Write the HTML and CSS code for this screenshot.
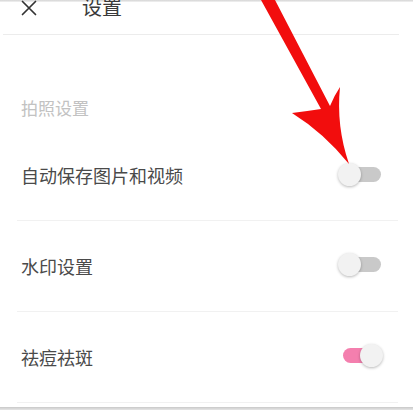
FILE: index.html
```html
<!DOCTYPE html>
<html lang="zh-CN">
<head>
<meta charset="utf-8">
<title>设置</title>
<link rel="stylesheet" href="styles.css">
</head>
<body>
<div class="page">
  <div class="top-edge"></div>
  <header class="header">
    <div class="header-row">
      <svg class="close-icon" viewBox="0 0 16 16" width="16" height="16" aria-hidden="true">
        <path d="M1.5 1.5 L14.5 14.5 M14.5 1.5 L1.5 14.5" stroke="#333" stroke-width="1.7" fill="none" stroke-linecap="round"/>
      </svg>
      <span class="title">设置</span>
    </div>
  </header>
  <main class="content">
    <div class="section-title">拍照设置</div>
    <div class="row">
      <span class="label">自动保存图片和视频</span>
      <span class="toggle"><span class="track"></span><span class="knob"></span></span>
    </div>
    <div class="row">
      <span class="label">水印设置</span>
      <span class="toggle"><span class="track"></span><span class="knob"></span></span>
    </div>
    <div class="row">
      <span class="label">祛痘祛斑</span>
      <span class="toggle on"><span class="track"></span><span class="knob"></span></span>
    </div>
  </main>
  <div class="bottom-edge"></div>
  <svg class="arrow" viewBox="0 0 413 410" width="413" height="410" aria-hidden="true">
    <path d="M261 0 L275 0 L330 106 Q334 96 340 87 Q336 126 349 164 Q324 133 292 113 Q308 111 321 109 Z" fill="#f20d0d"/>
  </svg>
</div>
</body>
</html>
```

FILE: styles.css
```css
html, body {
  margin: 0;
  padding: 0;
  background: #ffffff;
}

body {
  font-family: "Noto Sans CJK SC", "Noto Sans", sans-serif;
  width: 413px;
  height: 410px;
  overflow: hidden;
}

.page {
  position: relative;
  width: 413px;
  height: 410px;
  display: flex;
  flex-direction: column;
  overflow: hidden;
}

.top-edge {
  height: 2px;
  background: linear-gradient(#d4d4d4, #f3f3f3);
  flex: none;
}

.header {
  height: 32px;
  margin: 0 14px 0 3px;
  border-bottom: 1px solid #ececec;
  overflow: visible;
  flex: none;
}

.header-row {
  display: flex;
  align-items: center;
  height: 20px;
  margin-top: -5px;
  padding-left: 18px;
}

.close-icon {
  width: 16px;
  height: 16px;
  flex: none;
  margin-top: 2px;
}

.title {
  margin-left: 45px;
  font-size: 20px;
  line-height: 20px;
  color: #3a3a3a;
}

.content {
  margin: 0 15px 0 17px;
  display: flex;
  flex-direction: column;
  flex: none;
}

.section-title {
  height: 96px;
  box-sizing: border-box;
  padding: 62px 0 0 4px;
  font-size: 17px;
  line-height: 22px;
  color: #c2c2c2;
}

.row {
  height: 90px;
  box-sizing: border-box;
  display: flex;
  align-items: center;
  justify-content: space-between;
  padding: 0 15px 1px 4px;
  border-bottom: 1px solid #f1f1f1;
}

.row + .row {
  height: 91px;
}

.label {
  font-size: 18px;
  line-height: 24px;
  color: #4a4a4a;
}

.toggle {
  position: relative;
  width: 45px;
  height: 23px;
  flex: none;
  margin-top: -2px;
}

.track {
  position: absolute;
  left: 6px;
  right: 2px;
  top: 4px;
  height: 15px;
  border-radius: 8px;
  background: #c9c9c9;
}

.knob {
  position: absolute;
  left: 0;
  top: 0;
  width: 23px;
  height: 23px;
  border-radius: 50%;
  background: #f2f2f2;
  box-shadow: 0 1px 3px rgba(0, 0, 0, 0.28);
}

.toggle.on .track {
  left: 5px;
  right: 8px;
  background: #f47fae;
}

.toggle.on .knob {
  left: 22px;
}

.bottom-edge {
  margin-top: auto;
  height: 3px;
  background: linear-gradient(#c8c8c8, #e6e6e6);
  flex: none;
}

.arrow {
  position: absolute;
  left: 0;
  top: 0;
  pointer-events: none;
}
```
